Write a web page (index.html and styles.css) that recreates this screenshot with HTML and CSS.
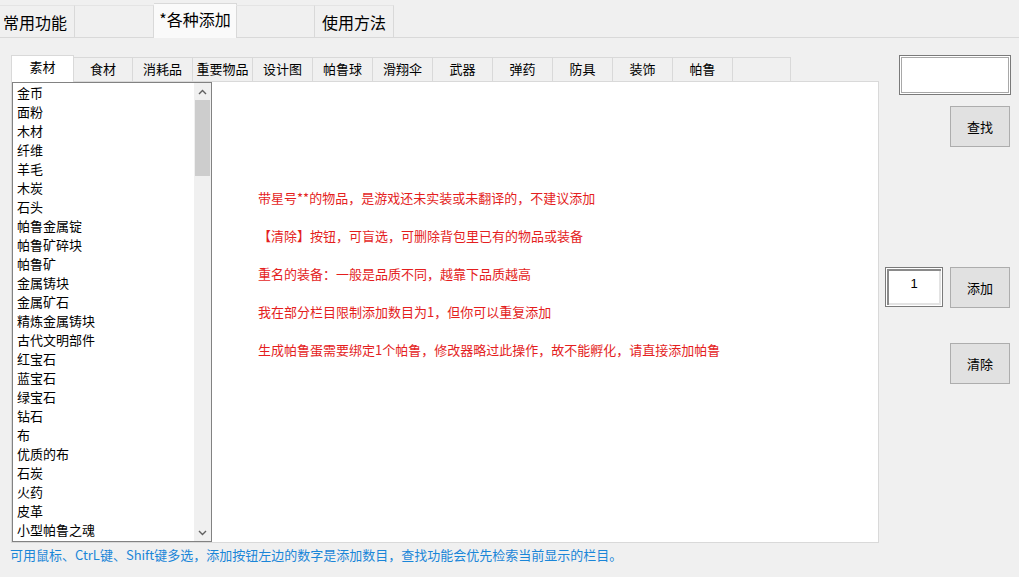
FILE: index.html
```html
<!DOCTYPE html>
<html lang="zh-CN">
<head>
<meta charset="utf-8">
<title>各种添加</title>
<link rel="stylesheet" href="styles.css">
</head>
<body>
<div class="topbar">
  <div class="ttab t1">常用功能</div>
  <div class="ttab t2"></div>
  <div class="ttab t3 active">*各种添加</div>
  <div class="ttab t4"></div>
  <div class="ttab t5">使用方法</div>
</div>
<div class="main">
  <div class="leftcol">
    <div class="tabstrip">
      <div class="itab sel">素材</div>
      <div class="itab first">食材</div>
      <div class="itab">消耗品</div>
      <div class="itab">重要物品</div>
      <div class="itab">设计图</div>
      <div class="itab">帕鲁球</div>
      <div class="itab">滑翔伞</div>
      <div class="itab">武器</div>
      <div class="itab">弹药</div>
      <div class="itab">防具</div>
      <div class="itab">装饰</div>
      <div class="itab">帕鲁</div>
      <div class="itab blank"></div>
    </div>
    <div class="panel">
      <div class="listbox">
        <ul class="items">
          <li>金币</li><li>面粉</li><li>木材</li><li>纤维</li><li>羊毛</li><li>木炭</li><li>石头</li>
          <li>帕鲁金属锭</li><li>帕鲁矿碎块</li><li>帕鲁矿</li><li>金属铸块</li><li>金属矿石</li>
          <li>精炼金属铸块</li><li>古代文明部件</li><li>红宝石</li><li>蓝宝石</li><li>绿宝石</li>
          <li>钻石</li><li>布</li><li>优质的布</li><li>石炭</li><li>火药</li><li>皮革</li><li>小型帕鲁之魂</li>
        </ul>
        <div class="scrollbar">
          <div class="arrow"><svg width="9" height="6" viewBox="0 0 9 6"><path d="M1 5 L4.5 1.5 L8 5" fill="none" stroke="#606060" stroke-width="1.4"/></svg></div>
          <div class="thumb"></div>
          <div class="track"></div>
          <div class="arrow"><svg width="9" height="6" viewBox="0 0 9 6"><path d="M1 1 L4.5 4.5 L8 1" fill="none" stroke="#606060" stroke-width="1.4"/></svg></div>
        </div>
      </div>
      <div class="notes">
        <p>带星号**的物品，是游戏还未实装或未翻译的，不建议添加</p>
        <p>【清除】按钮，可盲选，可删除背包里已有的物品或装备</p>
        <p>重名的装备：一般是品质不同，越靠下品质越高</p>
        <p>我在部分栏目限制添加数目为1，但你可以重复添加</p>
        <p>生成帕鲁蛋需要绑定1个帕鲁，修改器略过此操作，故不能孵化，请直接添加帕鲁</p>
      </div>
    </div>
    <div class="hint">可用鼠标、CtrL键、Shift键多选，添加按钮左边的数字是添加数目，查找功能会优先检索当前显示的栏目。</div>
  </div>
  <div class="rightcol">
    <div class="search"></div>
    <div class="btn find">查找</div>
    <div class="addrow">
      <div class="num">1</div>
      <div class="btn">添加</div>
    </div>
    <div class="btn clear">清除</div>
  </div>
</div>
</body>
</html>
```

FILE: styles.css
```css
* { box-sizing: border-box; }
html, body { margin: 0; padding: 0; }
body {
  width: 1019px;
  height: 577px;
  overflow: hidden;
  background: #f0f0f0;
  font-family: "Noto Sans CJK SC", "Liberation Sans", sans-serif;
  color: #000;
}
.topbar {
  display: flex;
  align-items: flex-end;
  height: 38px;
  border-bottom: 1px solid #d9d9d9;
}
.ttab {
  height: 32px;
  border-top: 1px solid #e4e4e4;
  border-right: 1px solid #d9d9d9;
  font-size: 16px;
  line-height: 30px;
  display: flex;
  align-items: center;
  justify-content: center;
  white-space: nowrap;
  color: #000;
}
.t1 { width: 75px; justify-content: flex-start; padding-left: 3px; }
.t2 { width: 79px; }
.t3 { width: 83px; }
.t4 { width: 78px; }
.t5 { width: 79px; }
.ttab.active {
  height: 35px;
  margin-bottom: -1px;
  background: #fafafa;
  border-top: 1px solid #d9d9d9;
  align-items: flex-start;
  padding-top: 0;
}
.ttab.active + .t4 { margin-left: -1px; width: 79px; }
.main {
  display: flex;
  padding: 17px 8px 0 11px;
}
.leftcol { width: 868px; }
.tabstrip {
  display: flex;
  align-items: flex-end;
  height: 26px;
}
.itab {
  width: 60px;
  height: 24px;
  border-top: 1px solid #d9d9d9;
  border-right: 1px solid #d9d9d9;
  font-size: 13px;
  line-height: 22px;
  text-align: center;
  white-space: nowrap;
  background: #f0f0f0;
}
.itab.first { width: 59px; }
.itab.blank { width: 58px; }
.itab.sel {
  width: 63px;
  height: 27px;
  margin-bottom: -1px;
  position: relative;
  z-index: 1;
  background: #fff;
  border-left: 1px solid #d9d9d9;
  line-height: 22px;
}
.panel {
  display: flex;
  height: 462px;
  background: #fff;
  border: 1px solid #d9d9d9;
}
.listbox {
  display: flex;
  width: 200px;
  height: 460px;
  border: 1px solid #828282;
  background: #fff;
  overflow: hidden;
}
.items {
  list-style: none;
  margin: 0;
  padding: 0 0 0 4px;
  flex: 1;
  font-size: 13px;
  line-height: 19px;
  color: #000;
}
.items li { height: 19px; white-space: nowrap; }
.scrollbar {
  width: 17px;
  display: flex;
  flex-direction: column;
  background: #f0f0f0;
}
.arrow {
  height: 17px;
  display: flex;
  align-items: center;
  justify-content: center;
}
.thumb {
  height: 76px;
  margin: 0 1px;
  background: #cdcdcd;
}
.track { flex: 1; }
.notes {
  padding: 97px 0 0 46px;
  color: #e41e1e;
  font-size: 13px;
}
.notes p {
  margin: 0;
  line-height: 38px;
  height: 38px;
  white-space: nowrap;
}
.hint {
  margin-top: 4px;
  margin-left: -1px;
  font-size: 13px;
  line-height: 16px;
  color: #1a86d8;
  white-space: nowrap;
}
.rightcol {
  width: 126px;
  margin-left: 6px;
  display: flex;
  flex-direction: column;
  align-items: flex-end;
}
.search {
  width: 112px;
  height: 40px;
  background: #fff;
  border: 1px solid #7a7a7a;
  box-shadow: inset 0 0 0 1px #fff, inset 0 0 0 2px #a8a8a8;
}
.btn {
  width: 60px;
  height: 41px;
  margin-right: 1px;
  background: #e1e1e1;
  border: 1px solid #adadad;
  font-size: 13px;
  display: flex;
  align-items: center;
  justify-content: center;
}
.find { margin-top: 11px; }
.addrow {
  margin-top: 120px;
  width: 126px;
  display: flex;
  justify-content: space-between;
  align-items: flex-start;
}
.num {
  width: 58px;
  height: 40px;
  background: #fff;
  border: 1px solid #7a7a7a;
  box-shadow: inset 0 0 0 1px #fff, inset 1px 1px 0 2px #8a8a8a, inset -1px -1px 0 2px #e3e3e3;
  font-family: "Liberation Sans", Arial, sans-serif;
  font-size: 13px;
  text-align: center;
  line-height: 14px;
  padding-top: 9px;
}
.clear { margin-top: 35px; }
```
